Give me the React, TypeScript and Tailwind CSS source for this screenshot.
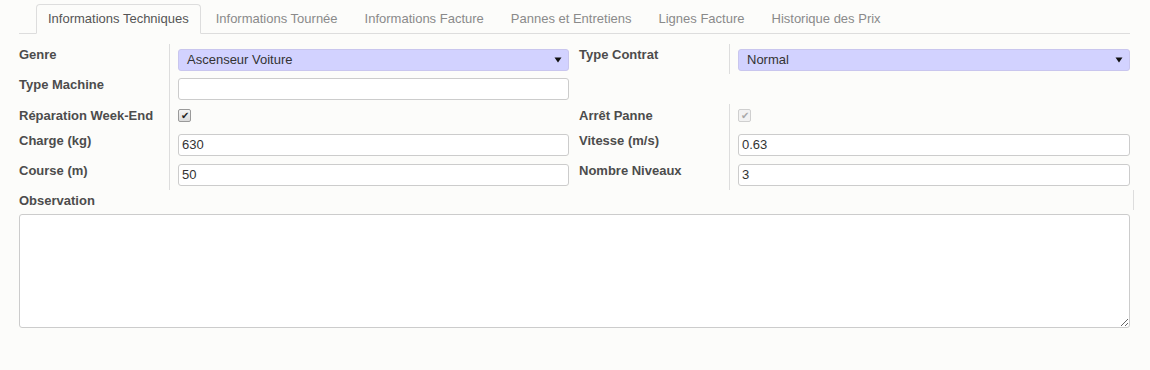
import type { ReactNode } from "react";

const TABS = [
  "Informations Techniques",
  "Informations Tournée",
  "Informations Facture",
  "Pannes et Entretiens",
  "Lignes Facture",
  "Historique des Prix",
];

function Label({ children, border = true, pt = "pt-[3px]" }: { children?: ReactNode; border?: boolean; pt?: string }) {
  return (
    <div
      className={`w-[151px] shrink-0 ${pt} pr-2 text-[13px] leading-[16px] font-bold text-[#4c4c4c] ${
        border ? "border-r border-[#dddddd]" : ""
      }`}
    >
      {children}
    </div>
  );
}

function SelectBox({ value, width }: { value: string; width: string }) {
  return (
    <div
      className={`${width} h-[22px] flex items-center justify-between rounded-[3px] border border-[#c9c6ee] bg-[#d2d2ff] pl-[8px] pr-[6px] text-[13px] text-[#333]`}
    >
      <span>{value}</span>
      <svg width="8" height="6" viewBox="0 0 8 6">
        <path d="M0.5 0.5 L7.5 0.5 L4 5.5 Z" fill="#111" />
      </svg>
    </div>
  );
}

function TextBox({ value, width }: { value?: string; width: string }) {
  return (
    <div
      className={`${width} h-[22px] flex items-center rounded-[3px] border border-[#cccccc] bg-white pl-[3px] text-[13px] text-[#333]`}
    >
      {value}
    </div>
  );
}

function Check({ disabled }: { disabled?: boolean }) {
  return (
    <div
      className={`w-[13px] h-[13px] rounded-[2px] border flex items-center justify-center text-[10px] leading-none ${
        disabled
          ? "border-[#cfcfcf] bg-[#f2f2f2] text-[#a8a8a8]"
          : "border-[#9a9a9a] bg-gradient-to-b from-[#f4f4f4] to-[#dcdcdc] text-[#222]"
      }`}
    >
      ✔
    </div>
  );
}

export default function App() {
  return (
    <div
      className="w-[1150px] h-[370px] bg-[#fcfcfa] text-[#4c4c4c]"
      style={{ fontFamily: '"Liberation Sans", Arial, sans-serif' }}
    >
      {/* onglets */}
      <div className="pt-[4px] pl-[19px]">
        <div className="w-[1111px] flex gap-[3px] pl-[17px] border-b border-[#dddddd]">
          {TABS.map((t, i) => (
            <div
              key={t}
              className={`h-[30px] px-[11px] flex items-center text-[13px] rounded-t-[4px] border -mb-px ${
                i === 0
                  ? "border-[#dddddd] border-b-[#fcfcfa] bg-[#fcfcfa] text-[#555]"
                  : "border-transparent text-[#8a8a8a]"
              }`}
            >
              {t}
            </div>
          ))}
        </div>
      </div>

      {/* formulaire */}
      <div className="pl-[19px] pt-[10px]">
        <div className="flex h-[30px]">
          <Label>Genre</Label>
          <div className="pl-[8px] pr-[10px] pt-[5px]">
            <SelectBox value="Ascenseur Voiture" width="w-[391px]" />
          </div>
          <Label>Type Contrat</Label>
          <div className="pl-[8px] pt-[5px]">
            <SelectBox value="Normal" width="w-[392px]" />
          </div>
        </div>

        <div className="flex h-[30px]">
          <Label>Type Machine</Label>
          <div className="pl-[8px] pr-[10px] pt-[4px]">
            <TextBox width="w-[391px]" />
          </div>
          <Label border={false} />
        </div>

        <div className="flex h-[26px]">
          <Label pt="pt-[4px]">Réparation Week-End</Label>
          <div className="w-[409px] pl-[8px] pt-[5px]">
            <Check />
          </div>
          <Label pt="pt-[4px]">Arrêt Panne</Label>
          <div className="pl-[8px] pt-[5px]">
            <Check disabled />
          </div>
        </div>

        <div className="flex h-[30px]">
          <Label>Charge (kg)</Label>
          <div className="pl-[8px] pr-[10px] pt-[4px]">
            <TextBox value="630" width="w-[391px]" />
          </div>
          <Label>Vitesse (m/s)</Label>
          <div className="pl-[8px] pt-[4px]">
            <TextBox value="0.63" width="w-[392px]" />
          </div>
        </div>

        <div className="flex h-[30px]">
          <Label>Course (m)</Label>
          <div className="pl-[8px] pr-[10px] pt-[4px]">
            <TextBox value="50" width="w-[391px]" />
          </div>
          <Label>Nombre Niveaux</Label>
          <div className="pl-[8px] pt-[4px]">
            <TextBox value="3" width="w-[392px]" />
          </div>
        </div>

        <div className="w-[1115px] h-[20px] pt-[3px] border-r border-[#dddddd] text-[13px] leading-[16px] font-bold text-[#4c4c4c]">
          Observation
        </div>
        <textarea
          className="block mt-[4px] w-[1111px] h-[114px] rounded-[3px] border border-[#cccccc] bg-white"
          defaultValue=""
        />
      </div>
    </div>
  );
}
